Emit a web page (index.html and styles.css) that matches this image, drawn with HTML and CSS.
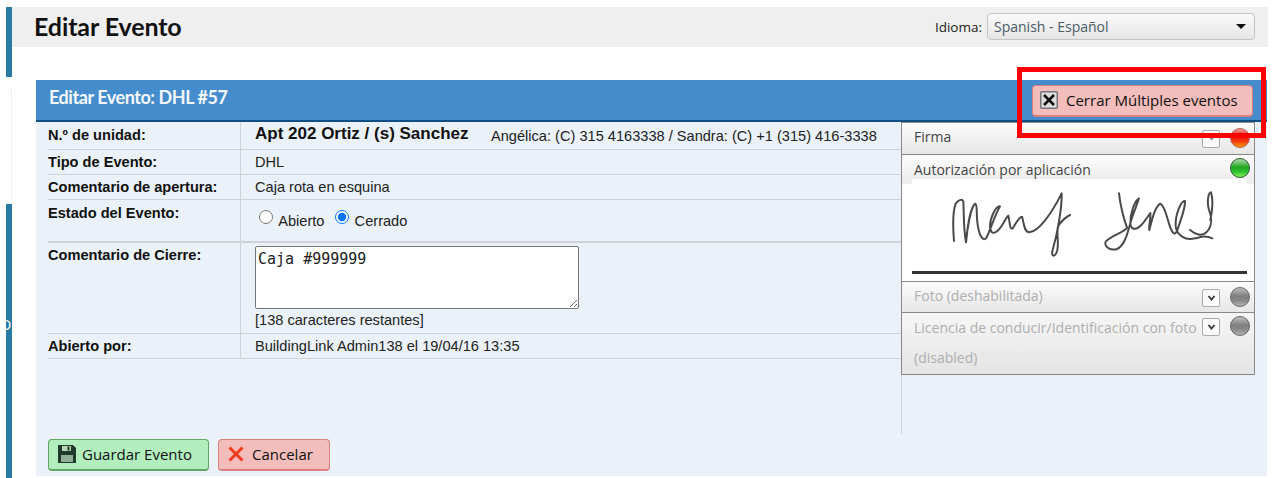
FILE: index.html
```html
<!DOCTYPE html>
<html>
    <head>
        <title>Editar Evento</title>
        <link rel="stylesheet" href="styles.css">
    </head>
    <body>
        <div id="page">
            <div id="rail">
                <div class="rail-top"></div>
                <div class="rail-gap"></div>
                <div class="rail-bottom"><span class="rail-letter">D</span></div>
            </div>
            <div id="main">
                <div id="page-head">
                    <h1>Editar Evento</h1>
                    <div class="lang">
                        <span class="lang-label">Idioma:</span>
                        <div class="lang-select">
                            <span>Spanish - Español</span>
                            <span class="lang-arrow"></span>
                        </div>
                    </div>
                </div>

                <div id="event-panel">
                    <div class="panel-head">
                        <h2>Editar Evento: DHL #57</h2>
                        <a class="btn btn-red btn-close-many">
                            <svg width="18" height="18" viewBox="0 0 18 18"><rect x="0.75" y="0.75" width="16.5" height="16.5" rx="1" fill="#DDD" stroke="#777" stroke-width="1.5"/><path d="M4 4L14 14M14 4L4 14" stroke="#111" stroke-width="2.6"/></svg>
                            Cerrar Múltiples eventos
                        </a>
                    </div>

                    <div class="panel-body">
                        <div class="fields">
                            <div class="row row-unit">
                                <div class="label">N.º de unidad:</div>
                                <div class="value">
                                    <span class="unit-name">Apt 202 Ortiz / (s) Sanchez</span>
                                    <span class="unit-phones">Angélica: (C) 315 4163338 / Sandra: (C) +1 (315) 416-3338</span>
                                </div>
                            </div>
                            <div class="row row-type">
                                <div class="label">Tipo de Evento:</div>
                                <div class="value">DHL</div>
                            </div>
                            <div class="row row-open">
                                <div class="label">Comentario de apertura:</div>
                                <div class="value">Caja rota en esquina</div>
                            </div>
                            <div class="row row-state">
                                <div class="label">Estado del Evento:</div>
                                <div class="value">
                                    <label class="radio"><input type="radio" name="estado"> Abierto</label>
                                    <label class="radio"><input type="radio" name="estado" checked> Cerrado</label>
                                </div>
                            </div>
                            <div class="row row-close">
                                <div class="label">Comentario de Cierre:</div>
                                <div class="value">
                                    <textarea class="close-comment">Caja #999999</textarea>
                                    <div class="chars-left">[138 caracteres restantes]</div>
                                </div>
                            </div>
                            <div class="row row-by">
                                <div class="label">Abierto por:</div>
                                <div class="value">BuildingLink Admin138 el 19/04/16 13:35</div>
                            </div>
                        </div>

                        <div class="side">
                            <div id="sign-box">
                                <div class="sign-row sign-firma">
                                    <span class="sign-title">Firma</span>
                                    <span class="toggle toggle-faint"><svg width="9" height="6" viewBox="0 0 9 6"><path d="M2 1.5H7L4.5 4.5Z" fill="#888"/></svg></span>
                                    <span class="led led-red"></span>
                                </div>
                                <div class="sign-row sign-auth">
                                    <span class="sign-title">Autorización por aplicación</span>
                                    <span class="led led-green"></span>
                                </div>
                                <div class="sign-image">
                                    <svg class="signature" width="285" height="80" viewBox="0 0 855 240">
                                        <g fill="none" stroke="#4A4A4A" stroke-width="6" stroke-linejoin="round" stroke-linecap="round">
                                            <path d="M42 168C38 120 40 75 47 56C52 48 68 38 70 50C72 85 70 130 78 172C82 130 92 65 106 56C114 60 106 95 116 135C120 155 130 168 138 160C150 140 160 100 180 64C170 60 150 95 150 125C152 155 172 145 188 118C196 105 200 95 205 92C210 110 208 135 218 130C226 120 236 95 246 95C252 110 250 140 268 142C296 140 335 85 365 25C366 70 352 145 338 195C332 215 345 220 352 195C358 165 345 135 358 118C368 105 380 95 390 90"/>
                                            <g transform="translate(465 0)">
                                                <path d="M72 25C76 60 86 100 96 128C88 142 48 152 32 170C26 186 48 198 66 192C88 182 96 150 106 115C114 85 126 60 132 40C118 48 106 85 106 115C108 140 128 135 146 112C155 100 162 90 166 84C168 100 160 125 163 135C172 100 180 65 196 56C210 62 216 100 226 128C234 148 240 150 246 138C255 110 272 70 270 48C258 46 240 90 242 125C246 150 270 168 300 160C318 156 330 150 352 160"/>
                                                <path d="M285 135C300 148 322 156 336 140C350 125 352 100 342 75C335 50 340 22 348 22C354 40 352 75 346 105"/>
                                            </g>
                                        </g>
                                    </svg>
                                    <div class="sign-line"></div>
                                </div>
                                <div class="sign-row sign-off sign-photo">
                                    <span class="sign-title">Foto (deshabilitada)</span>
                                    <span class="toggle"><svg width="9" height="6" viewBox="0 0 9 6"><path d="M1.5 1L4.5 4.5L7.5 1" fill="none" stroke="#333" stroke-width="1.8"/></svg></span>
                                    <span class="led led-grey"></span>
                                </div>
                                <div class="sign-row sign-off sign-license">
                                    <span class="sign-title">Licencia de conducir/Identificación con foto (disabled)</span>
                                    <span class="toggle"><svg width="9" height="6" viewBox="0 0 9 6"><path d="M1.5 1L4.5 4.5L7.5 1" fill="none" stroke="#333" stroke-width="1.8"/></svg></span>
                                    <span class="led led-grey"></span>
                                </div>
                            </div>
                        </div>
                    </div>

                    <div class="panel-foot">
                        <a class="btn btn-green">
                            <svg width="20" height="20" viewBox="0 0 20 20"><path d="M1 1H16L19 4V19H1Z" fill="#1F3A2C"/><rect x="5" y="2" width="9" height="5" fill="#B5D9B5"/><rect x="10.5" y="2.5" width="2" height="4" fill="#1F3A2C"/><rect x="4" y="11" width="12" height="7" fill="#8FAE98"/></svg>
                            Guardar Evento
                        </a>
                        <a class="btn btn-red">
                            <svg width="16" height="16" viewBox="0 0 16 16"><path d="M1.5 1.5L14.5 14.5M14.5 1.5L1.5 14.5" stroke="#F03A1C" stroke-width="3"/></svg>
                            Cancelar
                        </a>
                    </div>
                </div>
            </div>
        </div>
        <div id="highlight"></div>
    </body>
</html>
```

FILE: styles.css
```css
html, body {
    margin:0;
    padding:0;
    height:478px;
    overflow:hidden;
    background-color:#FFF;
    font-family:"Liberation Sans", Arial, sans-serif;
    font-size:14.6px;
    color:#222;
}

#page {
    display:flex;
    height:478px;
    padding:7px 0 0 6px;
    box-sizing:border-box;
}

/* left rail */
#rail {
    width:6px;
    display:flex;
    flex-direction:column;
}

.rail-top {
    height:70px;
    background-color:#2A7BA3;
}

.rail-gap {
    height:116px;
    margin-top:11px;
    border-right:1px dotted #E4E4E4;
}

.rail-bottom {
    flex:1;
    background-color:#2A7BA3;
    color:#FFF;
    font-size:14px;
    overflow:hidden;
}

.rail-letter {
    display:block;
    margin:113px 0 0 -5px;
}

#main {
    width:1256px;
}

/* page title */
#page-head {
    height:40px;
    background-color:#EFEFEF;
    display:flex;
    align-items:center;
    justify-content:space-between;
    padding:0 13px 0 22px;
}

#page-head h1 {
    margin:0 0 2px 0;
    font-family:Lato, sans-serif;
    font-size:25px;
    font-weight:bold;
    letter-spacing:-0.1px;
    color:#111;
}

.lang {
    display:flex;
    align-items:center;
    gap:5px;
    margin-bottom:1px;
    font-family:"Open Sans", sans-serif;
    font-size:14px;
}

.lang-label {
    font-size:13.5px;
}

.lang-select {
    width:268px;
    height:27px;
    box-sizing:border-box;
    border:1px solid #C4C4C4;
    border-radius:4px;
    background:linear-gradient(#FAFAFA, #E6E6E6);
    display:flex;
    align-items:center;
    justify-content:space-between;
    padding:0 8px 0 6px;
    color:#4A5A68;
}

.lang-arrow {
    width:0;
    height:0;
    border-left:5px solid transparent;
    border-right:5px solid transparent;
    border-top:5px solid #111;
}

/* panel */
#event-panel {
    margin:33px 0 0 24px;
    width:1231px;
    height:396px;
    background-color:#EAF1F8;
    display:flex;
    flex-direction:column;
}

.panel-head {
    height:40px;
    background-color:#448CCB;
    border-bottom:2px solid #0F4F86;
    display:flex;
    align-items:flex-start;
    justify-content:space-between;
    padding:0 14px 0 13px;
}

.panel-head h2 {
    margin:6px 0 0 0;
    font-family:Lato, sans-serif;
    font-size:18px;
    font-weight:bold;
    color:#F4F8FC;
    letter-spacing:-0.45px;
}

.btn {
    display:inline-flex;
    align-items:center;
    box-sizing:border-box;
    height:32px;
    padding-bottom:1px;
    border-radius:4px;
    font-family:"Open Sans", sans-serif;
    font-size:15px;
    color:#111;
}

.btn-red {
    background-color:#F2BDBA;
    border:1px solid #DC7F7F;
    border-bottom-width:2px;
}

.btn-green {
    background-color:#B2EDBE;
    border:1px solid #5FA662;
    border-bottom-width:2px;
}

.btn-close-many {
    width:221px;
    margin-top:5px;
    padding-left:7px;
    gap:8px;
}

.panel-body {
    flex:1;
    display:flex;
    align-items:flex-start;
    padding-left:12px;
}

/* field rows */
.fields {
    width:853px;
}

.row {
    display:flex;
    box-sizing:border-box;
    border-bottom:1px solid #CFD3D7;
}

.row-unit { height:28px; }
.row-type { height:25px; }
.row-open { height:25px; }
.row-state { height:43px; border-bottom-width:2px; }
.row-close { height:91px; }
.row-by { height:25px; }

.label {
    width:193px;
    box-sizing:border-box;
    border-right:1px solid #CFD3D7;
    font-weight:bold;
    padding-top:4px;
    color:#111;
}

.value {
    flex:1;
    padding:4px 0 0 14px;
}

.row-unit .value {
    padding-top:2px;
    display:flex;
    align-items:flex-start;
}

.row-unit .label,
.row-state .label {
    padding-top:5px;
}

.unit-name {
    font-size:17px;
    font-weight:bold;
    color:#111;
    width:236px;
}

.unit-phones {
    margin-top:4px;
}

.row-state .value {
    padding:10px 0 0 14px;
}

.radio {
    margin-right:2px;
}

.radio input {
    margin:0 2px 0 4px;
    width:14px;
    height:14px;
    vertical-align:2px;
}

.close-comment {
    display:block;
    width:324px;
    height:63px;
    box-sizing:border-box;
    margin-top:-1px;
    padding:3px 2px;
    font-family:"DejaVu Sans Mono", monospace;
    font-size:15px;
    line-height:19px;
    color:#222;
    border:1px solid #767676;
    border-radius:2px;
    background-color:#FFF;
}

.chars-left {
    margin-top:3px;
}

/* signature box */
.side {
    width:354px;
    height:312px;
    border-left:1px solid #CFD3D7;
    box-sizing:border-box;
}

#sign-box {
    width:354px;
    box-sizing:border-box;
    border:1px solid #888;
    margin-left:-1px;
    background-color:#FFF;
    font-family:"Open Sans", sans-serif;
    font-size:14px;
}

.sign-row {
    display:flex;
    align-items:flex-start;
    padding-left:12px;
    padding-right:4px;
    box-sizing:border-box;
    background:linear-gradient(#FCFCFC, #E6E6E6);
    border-bottom:1px solid #888;
}

.sign-title {
    flex:1;
    line-height:28px;
    color:#444;
}

.sign-firma { height:32px; }

.sign-auth {
    height:24px;
    border-bottom:none;
    background:linear-gradient(#FCFCFC, #EEE);
}

.sign-auth .sign-title {
    line-height:29px;
}

.sign-off .sign-title {
    color:#AEAEAE;
}

.sign-photo { height:31px; }

.sign-license {
    height:61px;
    border-bottom:none;
    background:linear-gradient(#F6F6F6, #E4E4E4);
}

.sign-license .sign-title {
    line-height:30px;
}

.toggle {
    flex-shrink:0;
    width:18px;
    height:18px;
    box-sizing:border-box;
    border:1px solid #AAA;
    border-radius:2px;
    background-color:#FAFAFA;
    margin:7px 10px 0 0;
    display:flex;
    align-items:center;
    justify-content:center;
}

.sign-license .toggle {
    margin-top:5px;
}

.led {
    flex-shrink:0;
    width:20px;
    height:20px;
    border-radius:50%;
    margin-top:5px;
    box-sizing:border-box;
}

.sign-license .led { margin-top:3px; }
.sign-auth .led { margin-top:3px; }

.led-red {
    background:linear-gradient(#F49A90, #F01A10 45%, #F04010 70%, #FF9A00);
    border:1px solid #B56060;
}

.led-green {
    background:linear-gradient(#B4D8B0, #22A822 45%, #2EBE2E 70%, #80F060);
    border:1px solid #2A5A30;
}

.led-grey {
    background:linear-gradient(#C0C0C0, #7E7E7E 45%, #8A8A8A 70%, #B4B4B4);
    border:1px solid #666;
}

.sign-image {
    height:103px;
    box-sizing:border-box;
    padding:6px 7px 0 10px;
    background:linear-gradient(#FFF, #FFF) 10px 0 / 335px 100% no-repeat, linear-gradient(#EEE 5px, #FFF 5px);
    border-bottom:1px solid #888;
}

.signature {
    display:block;
    margin-left:28px;
    filter:blur(0.4px);
}

.sign-line {
    height:3px;
    margin-top:6px;
    background-color:#333;
}

/* buttons at the bottom */
.panel-foot {
    height:37px;
    display:flex;
    gap:9px;
    padding-left:12px;
}

.panel-foot .btn-green {
    width:161px;
    padding-left:8px;
    gap:5px;
}

.panel-foot .btn-red {
    width:112px;
    padding-left:9px;
    gap:8px;
}

/* red marker drawn over the screenshot */
#highlight {
    position:absolute;
    left:1017px;
    top:67px;
    width:249px;
    height:71px;
    box-sizing:border-box;
    border:5px solid #FF0000;
}
```
